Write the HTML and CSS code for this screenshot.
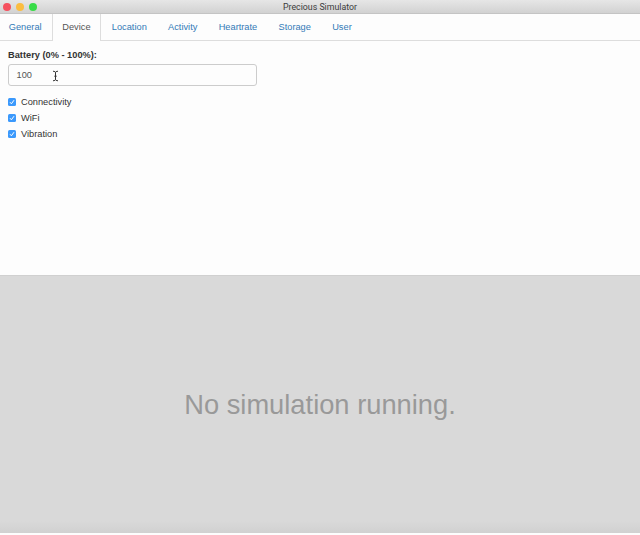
FILE: index.html
```
<!DOCTYPE html>
<html lang="en">
<head>
<meta charset="utf-8">
<title>Precious Simulator</title>
<link rel="stylesheet" href="styles.css">
</head>
<body>
<header class="titlebar">
  <div class="lights"><i class="close"></i><i class="minimize"></i><i class="expand"></i></div>
  <div class="title">Precious Simulator</div>
</header>
<nav class="tabs">
  <a class="tab">General</a>
  <a class="tab active">Device</a>
  <a class="tab">Location</a>
  <a class="tab">Activity</a>
  <a class="tab">Heartrate</a>
  <a class="tab">Storage</a>
  <a class="tab">User</a>
</nav>
<main class="panel">
  <div class="label">Battery (0% - 100%):</div>
  <div class="field">100
    <svg class="cursor" width="7" height="12" viewBox="0 0 7 12"><path d="M1 1.2Q3.5 1.2 3.5 2.7Q3.5 1.2 6 1.2M3.5 2.5V9.5M1 10.8Q3.5 10.8 3.5 9.3Q3.5 10.8 6 10.8M2.3 6.2H4.7"/></svg>
  </div>
  <div class="checks">
    <div class="check"><svg class="box" viewBox="0 0 8 8"><rect width="8" height="8" rx="1.5"/><path d="M2 4.2L3.4 5.8L6 2.2"/></svg>Connectivity</div>
    <div class="check"><svg class="box" viewBox="0 0 8 8"><rect width="8" height="8" rx="1.5"/><path d="M2 4.2L3.4 5.8L6 2.2"/></svg>WiFi</div>
    <div class="check"><svg class="box" viewBox="0 0 8 8"><rect width="8" height="8" rx="1.5"/><path d="M2 4.2L3.4 5.8L6 2.2"/></svg>Vibration</div>
  </div>
</main>
<section class="status">No simulation running.</section>
</body>
</html>
```
FILE: styles.css
```
* { box-sizing: border-box; }
body {
  margin: 0;
  height: 535px;
  overflow: hidden;
  display: flex;
  flex-direction: column;
  background: #fdfdfd;
  color: #333;
  font: 9.25px/13px "Liberation Sans", Arial, sans-serif;
}
.titlebar {
  height: 14px;
  flex: none;
  display: grid;
  grid-template-columns: 60px 1fr 60px;
  background: linear-gradient(#e6e6e6, #d2d2d2);
  border-bottom: 1px solid #c4c4c4;
}
.lights { display: flex; gap: 5px; padding: 2.5px 0 0 3.3px; }
.lights i { width: 8px; height: 8px; border-radius: 50%; }
.close { background: #f5515f; }
.minimize { background: #fbbd40; }
.expand { background: #38dc48; }
.title {
  text-align: center;
  font: 8.8px/14px Roboto, sans-serif;
  color: #3c3c3c;
}
.tabs {
  height: 27px;
  flex: none;
  display: flex;
  gap: 1px;
  border-bottom: 1px solid #ddd;
}
.tab {
  height: 27px;
  padding: 6px 9.15px 0;
  border: 1px solid transparent;
  border-top: 0;
  border-bottom: 0;
  color: #337ab7;
  line-height: 15px;
}
.tab:first-child { padding: 6px 8.5px 0 7.7px; }
.active {
  color: #555;
  background: #fdfdfd;
  border-color: #ddd;
}
.panel { height: 234px; flex: none; padding: 7px 8px 0; }
.label { font-weight: bold; line-height: 14px; }
.field {
  position: relative;
  width: 249px;
  height: 22px;
  margin-top: 2px;
  padding: 0 7.5px;
  border: 1px solid #ccc;
  border-radius: 3px;
  line-height: 21px;
  color: #555;
}
.cursor { position: absolute; left: 43px; top: 5px; fill: none; stroke: #333; stroke-width: 1; }
.checks { margin-top: 8px; }
.check { display: flex; align-items: center; height: 16px; gap: 5px; }
.box { width: 8px; height: 8px; fill: #3b99fc; }
.box path { fill: none; stroke: #fff; stroke-width: 1; }
.status {
  height: 258px;
  flex: none;
  padding-top: 109px;
  text-align: center;
  font-size: 27.3px;
  line-height: 40px;
  color: #999;
  background: linear-gradient(#d9d9d9 0 245px, #d0d0d0 258px);
  border-top: 1px solid #d0d0d0;
}
```
